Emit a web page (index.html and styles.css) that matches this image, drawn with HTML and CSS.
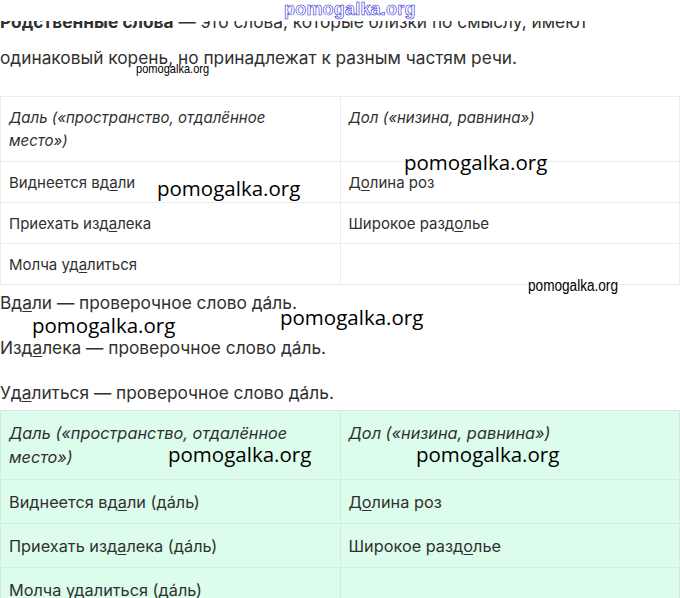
FILE: index.html
```html
<!DOCTYPE html>
<html lang="ru">
<head>
<meta charset="utf-8">
<link rel="stylesheet" href="styles.css">
</head>
<body>
<div class="page">
  <div class="intro">
    <p><b>Родственные слова</b> — это слова, которые близки по смыслу, имеют</p>
    <p>одинаковый корень, но принадлежат к разным частям речи.</p>
  </div>

  <table class="words plain">
    <tr>
      <th>Даль («пространство, отдалённое<br>место»)</th>
      <th>Дол («низина, равнина»)</th>
    </tr>
    <tr><td>Виднеется вд<u>а</u>ли</td><td>Д<u>о</u>лина роз</td></tr>
    <tr><td>Приехать изд<u>а</u>лека</td><td>Широкое разд<u>о</u>лье</td></tr>
    <tr><td>Молча уд<u>а</u>литься</td><td></td></tr>
  </table>

  <div class="checks">
    <p>Вд<u>а</u>ли — проверочное слово да́ль.</p>
    <p>Изд<u>а</u>лека — проверочное слово да́ль.</p>
    <p>Уд<u>а</u>литься — проверочное слово да́ль.</p>
  </div>

  <table class="words green">
    <tr>
      <th>Даль («пространство, отдалённое<br>место»)</th>
      <th>Дол («низина, равнина»)</th>
    </tr>
    <tr><td>Виднеется вд<u>а</u>ли (да́ль)</td><td>Д<u>о</u>лина роз</td></tr>
    <tr><td>Приехать изд<u>а</u>лека (да́ль)</td><td>Широкое разд<u>о</u>лье</td></tr>
    <tr><td>Молча уд<u>а</u>литься (да́ль)</td><td></td></tr>
  </table>

  <div class="topmask"><span class="wm-outline">pomogalka.org</span></div>
  <span class="wm small" style="left:136px;top:61px">pomogalka.org</span>
  <span class="wm big" style="left:157px;top:174px">pomogalka.org</span>
  <span class="wm big" style="left:404px;top:148px">pomogalka.org</span>
  <span class="wm small mid" style="left:528px;top:277px">pomogalka.org</span>
  <span class="wm big" style="left:32px;top:311px">pomogalka.org</span>
  <span class="wm big" style="left:280px;top:303px">pomogalka.org</span>
  <span class="wm big" style="left:168px;top:440px">pomogalka.org</span>
  <span class="wm big" style="left:416px;top:440px">pomogalka.org</span>
</div>
</body>
</html>
```
FILE: styles.css
```css
html, body {
  margin: 0;
  padding: 0;
  background: #ffffff;
}
body {
  font-family: "Inter", "Liberation Sans", sans-serif;
  color: #303030;
  overflow: hidden;
}
.page {
  position: relative;
  width: 680px;
  height: 598px;
  overflow: hidden;
}
.intro {
  padding-top: 4px;
}
.intro p {
  margin: 0;
  font-size: 17.3px;
  line-height: 36px;
}
.intro b {
  font-weight: 700;
}
u {
  text-decoration: underline;
  text-underline-offset: 2px;
}
.words {
  border-collapse: collapse;
  width: 680px;
  table-layout: fixed;
}
.words th,
.words td {
  width: 50%;
  text-align: left;
  vertical-align: top;
  font-weight: 400;
}
.words th {
  font-style: italic;
}
.plain {
  margin-top: 20px;
}
.plain th,
.plain td {
  font-size: 15px;
  line-height: 23px;
  padding: 9px 8px 8px;
  border: 1px solid #ececec;
}
.plain th {
  height: 46px;
  padding-bottom: 9px;
}
.checks {
  padding-top: 6px;
}
.checks p {
  margin: 0 0 21px;
  font-size: 17.3px;
  line-height: 24px;
}
.checks p:last-child {
  margin-bottom: 5px;
}
.green {
  background: #dcfcec;
}
.green th,
.green td {
  font-size: 16.3px;
  line-height: 24px;
  padding: 10px 8px 9px;
  border: 1px solid #d2ece0;
}
.green th {
  height: 49px;
}
.topmask {
  position: absolute;
  left: 0;
  top: 0;
  width: 680px;
  height: 21px;
  background: #ffffff;
}
.wm-outline {
  position: absolute;
  left: 284px;
  top: -1px;
  font-family: "Liberation Sans", sans-serif;
  font-weight: 700;
  font-size: 18px;
  color: #ffffff;
  -webkit-text-stroke: 0.6px #2a2ad8;
  letter-spacing: 0.2px;
}
.wm {
  position: absolute;
  color: #000000;
  white-space: nowrap;
}
.wm.big {
  font-family: "Open Sans", sans-serif;
  font-size: 20.5px;
  line-height: 28px;
}
.wm.small {
  font-family: "Liberation Sans Narrow", "Liberation Sans", sans-serif;
  font-size: 13px;
  line-height: 16px;
  transform: scaleX(0.85);
  transform-origin: left center;
}
.wm.small.mid {
  font-size: 16px;
  line-height: 18px;
}
```
